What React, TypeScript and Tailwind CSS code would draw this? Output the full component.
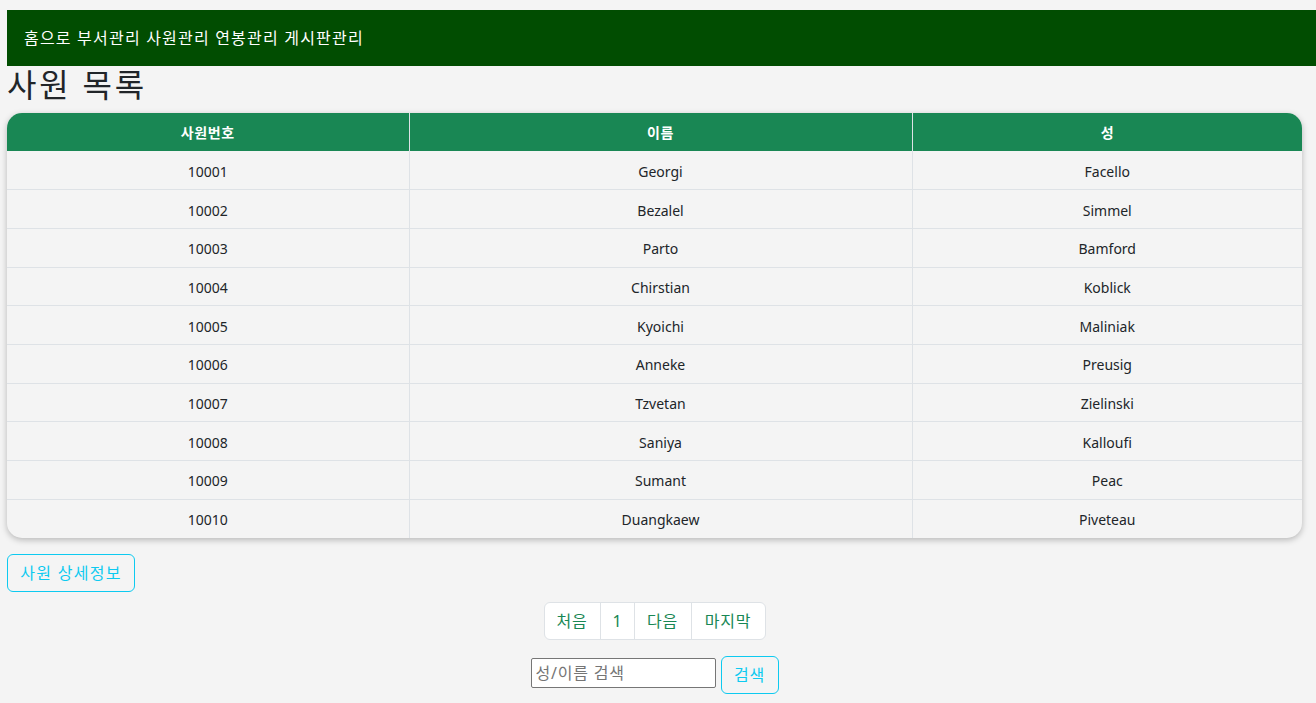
import React from "react";

const rows = [
  ["10001", "Georgi", "Facello"],
  ["10002", "Bezalel", "Simmel"],
  ["10003", "Parto", "Bamford"],
  ["10004", "Chirstian", "Koblick"],
  ["10005", "Kyoichi", "Maliniak"],
  ["10006", "Anneke", "Preusig"],
  ["10007", "Tzvetan", "Zielinski"],
  ["10008", "Saniya", "Kalloufi"],
  ["10009", "Sumant", "Peac"],
  ["10010", "Duangkaew", "Piveteau"],
];

export default function App() {
  return (
    <div
      className="min-h-[703px] bg-[#f4f4f4] text-[#212529] pt-[10px] pl-[7px] pr-[14px]"
      style={{ fontFamily: '"Noto Sans", "Noto Sans CJK KR", sans-serif' }}
    >
      <nav className="h-[56px] bg-[#014d01] -mr-[14px] flex items-center pl-[17px] text-white text-[16px] tracking-[1.2px]">
        홈으로 부서관리 사원관리 연봉관리 게시판관리
      </nav>
      <h1 className="text-[32px] leading-[40px] -mt-[1px] mb-[8px] font-normal tracking-[2.8px]">사원 목록</h1>
      <div className="rounded-[15px] overflow-hidden shadow-[0_2px_6px_rgba(0,0,0,0.25)] bg-[#f4f4f4]">
        <table className="w-full border-collapse text-[14px] table-fixed">
          <colgroup>
            <col className="w-[402px]" />
            <col className="w-[503px]" />
            <col />
          </colgroup>
          <thead>
            <tr className="bg-[#198754] text-white h-[38px]">
              <th className="font-bold border-r border-[#dee2e6] tracking-[0.6px]">사원번호</th>
              <th className="font-bold border-r border-[#dee2e6] tracking-[0.6px]">이름</th>
              <th className="font-bold">성</th>
            </tr>
          </thead>
          <tbody>
            {rows.map((r, i) => (
              <tr
                key={r[0]}
                className={`h-[38.7px] ${i < rows.length - 1 ? "border-b border-[#dee2e6]" : ""}`}
              >
                <td className="text-center border-r border-[#dee2e6] pt-[2px]">{r[0]}</td>
                <td className="text-center border-r border-[#dee2e6] pt-[2px]">{r[1]}</td>
                <td className="text-center pt-[2px]">{r[2]}</td>
              </tr>
            ))}
          </tbody>
        </table>
      </div>
      <div className="mt-[16px]">
        <button className="h-[38px] w-[128px] border border-[#0dcaf0] rounded-[6px] text-[#0dcaf0] text-[16px] bg-transparent tracking-[1.3px]">
          사원 상세정보
        </button>
      </div>
      <div className="flex justify-center mt-[10px]">
        <div className="flex h-[38px] bg-white border border-[#dee2e6] rounded-[6px] text-[#198754] text-[16px]">
          <span className="w-[56px] flex items-center justify-center border-r border-[#dee2e6] tracking-[0.8px]">처음</span>
          <span className="w-[34px] flex items-center justify-center border-r border-[#dee2e6]">1</span>
          <span className="w-[57px] flex items-center justify-center border-r border-[#dee2e6] tracking-[0.8px]">다음</span>
          <span className="w-[73px] flex items-center justify-center tracking-[0.8px]">마지막</span>
        </div>
      </div>
      <div className="flex justify-center items-start gap-[5px] mt-[16px]">
        <input
          placeholder="성/이름 검색"
          className="mt-[2px] w-[185px] h-[30px] border border-[#767676] rounded-[2px] bg-white px-[4px] text-[16px] tracking-[0.8px] placeholder:text-[#757575]"
        />
        <button className="h-[38px] w-[58px] border border-[#0dcaf0] rounded-[6px] text-[#0dcaf0] text-[16px] tracking-[0.8px]">
          검색
        </button>
      </div>
    </div>
  );
}
